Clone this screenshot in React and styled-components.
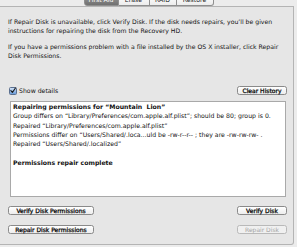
import styled, { createGlobalStyle } from "styled-components";

const GlobalStyle = createGlobalStyle`
  html, body {
    margin: 0;
    padding: 0;
    background: #ececec;
  }
  body {
    font-family: "DejaVu Sans", "Liberation Sans", sans-serif;
    color: #111;
  }
`;

const Window = styled.div`
  width: 297px;
  height: 247px;
  overflow: hidden;
  display: flex;
  flex-direction: column;
`;

const TabBar = styled.div`
  height: 6px;
  display: flex;
  justify-content: center;
  align-items: flex-end;
  overflow: hidden;
`;

const Tab = styled.div`
  width: ${(p) => p.$width}px;
  height: 12px;
  box-sizing: border-box;
  display: flex;
  align-items: center;
  justify-content: center;
  font-size: 6.2px;
  line-height: 1;
  color: ${(p) => (p.$active ? "#fff" : "#222")};
  background: ${(p) =>
    p.$active
      ? "linear-gradient(#9a9a9a, #707070)"
      : "linear-gradient(#ffffff, #ececec)"};
  border: 1px solid #8f8f8f;
  border-left: none;

  &:first-child {
    border-left: 1px solid #8f8f8f;
    border-bottom-left-radius: 3px;
  }
  &:last-child {
    border-bottom-right-radius: 3px;
  }
`;

const Panel = styled.div`
  flex: none;
  width: 294px;
  height: 239px;
  box-sizing: border-box;
  background: #e6e6e6;
  border: 1px solid #b4b4b4;
  border-left: none;
  border-bottom-right-radius: 3px;
  padding: 10px 6px 0 8px;
  display: flex;
  flex-direction: column;
`;

const Text = styled.p`
  margin: 0 0 ${(p) => p.$gap || 0}px;
  font-size: 6.15px;
  line-height: 9px;
`;

const OptionsRow = styled.div`
  display: flex;
  align-items: center;
  justify-content: space-between;
  margin-top: 26px;
  height: 9px;
  padding-left: 1px;
`;

const CheckLabel = styled.label`
  display: flex;
  align-items: center;
  gap: 2px;
  font-size: 6.2px;
  line-height: 9px;
`;

const Box = styled.span`
  width: 8px;
  height: 8px;
  box-sizing: border-box;
  border: 1px solid #5a6f8f;
  border-radius: 1.5px;
  background: linear-gradient(#cfe1f7, #6a9bd8);
  display: flex;
  align-items: center;
  justify-content: center;

  svg {
    display: block;
  }
`;

const Button = styled.button`
  width: ${(p) => p.$width}px;
  height: 9px;
  padding: 0;
  box-sizing: border-box;
  border: 1px solid ${(p) => (p.disabled ? "#b9b9b9" : "#8a8a8a")};
  border-radius: 2.5px;
  background: ${(p) =>
    p.disabled ? "#f0f0f0" : "linear-gradient(#ffffff, #ededed)"};
  font-family: "DejaVu Sans", "Liberation Sans", sans-serif;
  font-size: 6px;
  font-weight: 400;
  line-height: 7px;
  color: ${(p) => (p.disabled ? "#a3a3a3" : "#000")};
  -webkit-text-stroke: ${(p) => (p.disabled ? "0" : "0.25px #000")};
  text-align: center;
  white-space: nowrap;
`;

const Log = styled.div`
  margin: 6px 1px 0 2px;
  height: 96px;
  box-sizing: border-box;
  background: #fff;
  border: 1px solid #a9a9a9;
  padding: 0 2px;
  font-size: 6.2px;
  line-height: 9.3px;
  white-space: nowrap;
  overflow: hidden;
`;

const LogLine = styled.div`
  font-weight: ${(p) => (p.$bold ? 700 : 400)};
  min-height: 9.3px;
`;

const ButtonRow = styled.div`
  display: flex;
  justify-content: space-between;
  margin-top: ${(p) => p.$top}px;
`;

function Checkbox() {
  return (
    <Box>
      <svg width="7" height="7" viewBox="0 0 7 7">
        <path
          d="M1 3.6 L2.8 5.6 L6.4 0.6"
          fill="none"
          stroke="#1b1b1b"
          strokeWidth="1.3"
          strokeLinecap="round"
          strokeLinejoin="round"
        />
      </svg>
    </Box>
  );
}

const tabs = [
  { name: "First Aid", width: 35, active: true },
  { name: "Erase", width: 31 },
  { name: "RAID", width: 27 },
  { name: "Restore", width: 37 },
];

const log = [
  { text: "Repairing permissions for \u201cMountain\u00a0 Lion\u201d", bold: true },
  { text: "Group differs on \u201cLibrary/Preferences/com.apple.alf.plist\u201d; should be 80; group is 0." },
  { text: "Repaired \u201cLibrary/Preferences/com.apple.alf.plist\u201d" },
  { text: "Permissions differ on \u201cUsers/Shared/.loca...uld be -rw-r--r-- ; they are -rw-rw-rw- ." },
  { text: "Repaired \u201cUsers/Shared/.localized\u201d" },
  { text: "" },
  { text: "Permissions repair complete", bold: true },
];

export default function App() {
  return (
    <>
      <GlobalStyle />
      <Window>
        <TabBar>
          {tabs.map((t) => (
            <Tab key={t.name} $width={t.width} $active={t.active}>
              {t.name}
            </Tab>
          ))}
        </TabBar>
        <Panel>
          <Text $gap={7}>
            If Repair Disk is unavailable, click Verify Disk. If the disk needs
            repairs, you’ll be given instructions for repairing the disk from
            the Recovery HD.
          </Text>
          <Text>
            If you have a permissions problem with a file installed by the OS X
            installer, click Repair Disk Permissions.
          </Text>
          <OptionsRow>
            <CheckLabel>
              <Checkbox />
              Show details
            </CheckLabel>
            <Button $width={50}>Clear History</Button>
          </OptionsRow>
          <Log>
            {log.map((l, i) => (
              <LogLine key={i} $bold={l.bold}>
                {l.text}
              </LogLine>
            ))}
          </Log>
          <ButtonRow $top={9}>
            <Button $width={86}>Verify Disk Permissions</Button>
            <Button $width={50}>Verify Disk</Button>
          </ButtonRow>
          <ButtonRow $top={10}>
            <Button $width={86}>Repair Disk Permissions</Button>
            <Button $width={50} disabled>
              Repair Disk
            </Button>
          </ButtonRow>
        </Panel>
      </Window>
    </>
  );
}
